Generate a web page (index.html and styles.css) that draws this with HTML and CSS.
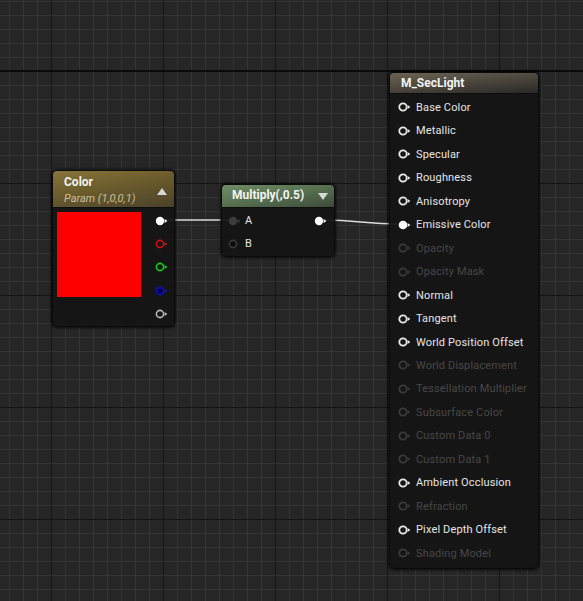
FILE: index.html
```html
<!DOCTYPE html>
<html>
<head>
<meta charset="utf-8">
<link rel="stylesheet" href="styles.css">
</head>
<body>
<div class="canvas">
  <div class="axis-line"></div>
  <svg class="wires" width="583" height="601" viewBox="0 0 583 601">
    <path d="M164 220 L229 220" />
    <path d="M323 220 C 360 220, 362 224, 401 224" />
  </svg>

  <!-- Color parameter node -->
  <div class="node node-color">
    <div class="header header-gold">
      <div class="titles">
        <div class="title">Color</div>
        <div class="subtitle">Param (1,0,0,1)</div>
      </div>
      <span class="tri tri-up"></span>
    </div>
    <div class="body color-body">
      <div class="swatch"></div>
      <div class="out-pins">
        <div class="pin-row"><svg class="pin" viewBox="0 0 14 10"><circle cx="5" cy="5" r="4.2" fill="#fff"/><polygon points="9.6,3 12.4,5 9.6,7" fill="#fff"/></svg></div>
        <div class="pin-row"><svg class="pin" viewBox="0 0 14 10"><circle cx="5" cy="5" r="3.6" fill="none" stroke="#d01010" stroke-width="1.6"/><polygon points="9.6,3 12.4,5 9.6,7" fill="#d01010"/></svg></div>
        <div class="pin-row"><svg class="pin" viewBox="0 0 14 10"><circle cx="5" cy="5" r="3.6" fill="none" stroke="#10d010" stroke-width="1.6"/><polygon points="9.6,3 12.4,5 9.6,7" fill="#10d010"/></svg></div>
        <div class="pin-row"><svg class="pin" viewBox="0 0 14 10"><circle cx="5" cy="5" r="3.6" fill="#000050" stroke="#1010c8" stroke-width="1.6"/><polygon points="9.6,3 12.4,5 9.6,7" fill="#1010c8"/></svg></div>
        <div class="pin-row"><svg class="pin" viewBox="0 0 14 10"><circle cx="5" cy="5" r="3.6" fill="none" stroke="#b8b8b8" stroke-width="1.6"/><polygon points="9.6,3 12.4,5 9.6,7" fill="#b8b8b8"/></svg></div>
      </div>
    </div>
  </div>

  <!-- Multiply node -->
  <div class="node node-mult">
    <div class="header header-green">
      <div class="title">Multiply(,0.5)</div>
      <span class="tri tri-down"></span>
    </div>
    <div class="body mult-body">
      <div class="mult-row">
        <div class="in-pin">
          <svg class="pin" viewBox="0 0 14 10"><circle cx="5" cy="5" r="4.2" fill="#3c3c3c"/><polygon points="9.6,3 12.4,5 9.6,7" fill="#3c3c3c"/></svg>
          <span class="pin-label">A</span>
        </div>
        <svg class="pin" viewBox="0 0 14 10"><circle cx="5" cy="5" r="4.2" fill="#fff"/><polygon points="9.6,3 12.4,5 9.6,7" fill="#fff"/></svg>
      </div>
      <div class="mult-row">
        <div class="in-pin">
          <svg class="pin" viewBox="0 0 14 10"><circle cx="5" cy="5" r="3.6" fill="#0c0c0c" stroke="#3a3a3a" stroke-width="1.6"/></svg>
          <span class="pin-label">B</span>
        </div>
      </div>
    </div>
  </div>

  <!-- Material result node -->
  <div class="node node-mat">
    <div class="header header-mat">
      <div class="title">M_SecLight</div>
    </div>
    <div class="body mat-body">
      <div class="mat-row"><svg class="pin" viewBox="0 0 14 10"><circle cx="5" cy="5" r="3.7" fill="none" stroke="#e8e8e8" stroke-width="1.8"/><polygon points="9.6,3 12.4,5 9.6,7" fill="#e8e8e8"/></svg><span>Base Color</span></div>
      <div class="mat-row"><svg class="pin" viewBox="0 0 14 10"><circle cx="5" cy="5" r="3.7" fill="none" stroke="#e8e8e8" stroke-width="1.8"/><polygon points="9.6,3 12.4,5 9.6,7" fill="#e8e8e8"/></svg><span>Metallic</span></div>
      <div class="mat-row"><svg class="pin" viewBox="0 0 14 10"><circle cx="5" cy="5" r="3.7" fill="none" stroke="#e8e8e8" stroke-width="1.8"/><polygon points="9.6,3 12.4,5 9.6,7" fill="#e8e8e8"/></svg><span>Specular</span></div>
      <div class="mat-row"><svg class="pin" viewBox="0 0 14 10"><circle cx="5" cy="5" r="3.7" fill="none" stroke="#e8e8e8" stroke-width="1.8"/><polygon points="9.6,3 12.4,5 9.6,7" fill="#e8e8e8"/></svg><span>Roughness</span></div>
      <div class="mat-row"><svg class="pin" viewBox="0 0 14 10"><circle cx="5" cy="5" r="3.7" fill="none" stroke="#e8e8e8" stroke-width="1.8"/><polygon points="9.6,3 12.4,5 9.6,7" fill="#e8e8e8"/></svg><span>Anisotropy</span></div>
      <div class="mat-row"><svg class="pin" viewBox="0 0 14 10"><circle cx="5" cy="5" r="4.3" fill="#fff"/><polygon points="9.6,3 12.4,5 9.6,7" fill="#fff"/></svg><span>Emissive Color</span></div>
      <div class="mat-row dim"><svg class="pin" viewBox="0 0 14 10"><circle cx="5" cy="5" r="3.7" fill="none" stroke="#3a3a3a" stroke-width="1.8"/><polygon points="9.6,3 12.4,5 9.6,7" fill="#3a3a3a"/></svg><span>Opacity</span></div>
      <div class="mat-row dim"><svg class="pin" viewBox="0 0 14 10"><circle cx="5" cy="5" r="3.7" fill="none" stroke="#3a3a3a" stroke-width="1.8"/><polygon points="9.6,3 12.4,5 9.6,7" fill="#3a3a3a"/></svg><span>Opacity Mask</span></div>
      <div class="mat-row"><svg class="pin" viewBox="0 0 14 10"><circle cx="5" cy="5" r="3.7" fill="none" stroke="#e8e8e8" stroke-width="1.8"/><polygon points="9.6,3 12.4,5 9.6,7" fill="#e8e8e8"/></svg><span>Normal</span></div>
      <div class="mat-row"><svg class="pin" viewBox="0 0 14 10"><circle cx="5" cy="5" r="3.7" fill="none" stroke="#e8e8e8" stroke-width="1.8"/><polygon points="9.6,3 12.4,5 9.6,7" fill="#e8e8e8"/></svg><span>Tangent</span></div>
      <div class="mat-row"><svg class="pin" viewBox="0 0 14 10"><circle cx="5" cy="5" r="3.7" fill="none" stroke="#e8e8e8" stroke-width="1.8"/><polygon points="9.6,3 12.4,5 9.6,7" fill="#e8e8e8"/></svg><span>World Position Offset</span></div>
      <div class="mat-row dim"><svg class="pin" viewBox="0 0 14 10"><circle cx="5" cy="5" r="3.7" fill="none" stroke="#3a3a3a" stroke-width="1.8"/><polygon points="9.6,3 12.4,5 9.6,7" fill="#3a3a3a"/></svg><span>World Displacement</span></div>
      <div class="mat-row dim"><svg class="pin" viewBox="0 0 14 10"><circle cx="5" cy="5" r="3.7" fill="none" stroke="#3a3a3a" stroke-width="1.8"/><polygon points="9.6,3 12.4,5 9.6,7" fill="#3a3a3a"/></svg><span>Tessellation Multiplier</span></div>
      <div class="mat-row dim"><svg class="pin" viewBox="0 0 14 10"><circle cx="5" cy="5" r="3.7" fill="none" stroke="#3a3a3a" stroke-width="1.8"/><polygon points="9.6,3 12.4,5 9.6,7" fill="#3a3a3a"/></svg><span>Subsurface Color</span></div>
      <div class="mat-row dim"><svg class="pin" viewBox="0 0 14 10"><circle cx="5" cy="5" r="3.7" fill="none" stroke="#3a3a3a" stroke-width="1.8"/><polygon points="9.6,3 12.4,5 9.6,7" fill="#3a3a3a"/></svg><span>Custom Data 0</span></div>
      <div class="mat-row dim"><svg class="pin" viewBox="0 0 14 10"><circle cx="5" cy="5" r="3.7" fill="none" stroke="#3a3a3a" stroke-width="1.8"/><polygon points="9.6,3 12.4,5 9.6,7" fill="#3a3a3a"/></svg><span>Custom Data 1</span></div>
      <div class="mat-row"><svg class="pin" viewBox="0 0 14 10"><circle cx="5" cy="5" r="3.7" fill="none" stroke="#e8e8e8" stroke-width="1.8"/><polygon points="9.6,3 12.4,5 9.6,7" fill="#e8e8e8"/></svg><span>Ambient Occlusion</span></div>
      <div class="mat-row dim"><svg class="pin" viewBox="0 0 14 10"><circle cx="5" cy="5" r="3.7" fill="none" stroke="#3a3a3a" stroke-width="1.8"/><polygon points="9.6,3 12.4,5 9.6,7" fill="#3a3a3a"/></svg><span>Refraction</span></div>
      <div class="mat-row"><svg class="pin" viewBox="0 0 14 10"><circle cx="5" cy="5" r="3.7" fill="none" stroke="#e8e8e8" stroke-width="1.8"/><polygon points="9.6,3 12.4,5 9.6,7" fill="#e8e8e8"/></svg><span>Pixel Depth Offset</span></div>
      <div class="mat-row dim"><svg class="pin" viewBox="0 0 14 10"><circle cx="5" cy="5" r="3.7" fill="none" stroke="#3a3a3a" stroke-width="1.8"/><polygon points="9.6,3 12.4,5 9.6,7" fill="#3a3a3a"/></svg><span>Shading Model</span></div>
    </div>
  </div>
</div>
</body>
</html>
```

FILE: styles.css
```css
* { box-sizing: border-box; }

html, body {
  margin: 0;
  padding: 0;
  background: #262626;
}

.canvas {
  position: relative;
  width: 583px;
  height: 601px;
  overflow: hidden;
  font-family: Roboto, "Liberation Sans", sans-serif;
  background-color: #262626;
  background-image:
    linear-gradient(to right, #151515 0 1px, transparent 1px),
    linear-gradient(to bottom, #151515 0 1px, transparent 1px),
    linear-gradient(to right, #353535 0 1px, transparent 1px),
    linear-gradient(to bottom, #353535 0 1px, transparent 1px);
  background-size: 112px 112px, 112px 112px, 14px 14px, 14px 14px;
  background-position: 51px 0, 0 71px, 9px 0, 0 1px;
}

.axis-line {
  position: absolute;
  left: 0;
  right: 0;
  top: 70px;
  height: 2px;
  background: #0a0a0a;
}

.wires {
  position: absolute;
  left: 0;
  top: 0;
}

.wires path {
  fill: none;
  stroke: #dcdcdc;
  stroke-width: 1.6;
}

.node {
  position: absolute;
  background: rgba(20, 20, 20, 0.94);
  border: 1px solid #0a0a0a;
  border-radius: 5px;
  box-shadow: 0 0 3px 1px rgba(0, 0, 0, 0.7);
  color: #e6e6e6;
  overflow: hidden;
}

.header {
  display: flex;
  align-items: flex-start;
  justify-content: space-between;
  border-bottom: 1px solid #0d0d0d;
}

.title {
  font-weight: 700;
  font-size: 12px;
  line-height: 14px;
  color: #f2f2f2;
}

.subtitle {
  font-style: italic;
  font-size: 11px;
  line-height: 13px;
  color: #c9bf9a;
  margin-top: 3px;
}

.tri {
  width: 0;
  height: 0;
  border-left: 5px solid transparent;
  border-right: 5px solid transparent;
}

.tri-up {
  border-bottom: 7px solid #d8d8d8;
  margin-top: 13px;
}

.tri-down {
  border-top: 7px solid #d8d8d8;
  margin-top: 5px;
}

.pin {
  width: 14px;
  height: 10px;
  flex: none;
  display: block;
}

/* Color node */
.node-color {
  left: 52px;
  top: 170px;
  width: 123px;
  height: 157px;
}

.header-gold {
  height: 37px;
  padding: 4px 7px 0 11px;
  background: linear-gradient(170deg, #86743a 0%, #6b5c2c 45%, #4a412a 100%);
}

.color-body {
  display: flex;
  padding: 4px 0 0 4px;
}

.swatch {
  width: 84px;
  height: 85px;
  background: #ff0000;
}

.out-pins {
  display: flex;
  flex-direction: column;
  margin-left: 14px;
  margin-top: -3px;
}

.pin-row {
  height: 23.4px;
  display: flex;
  align-items: center;
}

/* Multiply node */
.node-mult {
  left: 221px;
  top: 184px;
  width: 114px;
  height: 73px;
}

.header-green {
  height: 23px;
  padding: 3px 6px 0 10px;
  background: linear-gradient(170deg, #6f8d66 0%, #56704f 50%, #3e4a3b 100%);
}

.mult-body {
  padding: 1px 6px 0 6px;
}

.mult-row {
  height: 23px;
  display: flex;
  align-items: center;
  justify-content: space-between;
}

.in-pin {
  display: flex;
  align-items: center;
}

.pin-label {
  font-size: 11px;
  color: #e6e6e6;
  margin-left: 3px;
}

/* Material node */
.node-mat {
  left: 389px;
  top: 72px;
  width: 150px;
  height: 497px;
}

.header-mat {
  height: 21px;
  padding: 3px 6px 0 11px;
  background: linear-gradient(175deg, #6b6354 0%, #4e493f 45%, #2a2826 100%);
}

.mat-body {
  padding: 1.6px 0 0 8px;
}

.mat-row {
  height: 23.47px;
  display: flex;
  align-items: center;
  font-size: 11px;
  letter-spacing: 0.15px;
  color: #e6e6e6;
}

.mat-row span {
  margin-left: 4px;
  white-space: nowrap;
}

.mat-row.dim {
  color: #474747;
}
```
